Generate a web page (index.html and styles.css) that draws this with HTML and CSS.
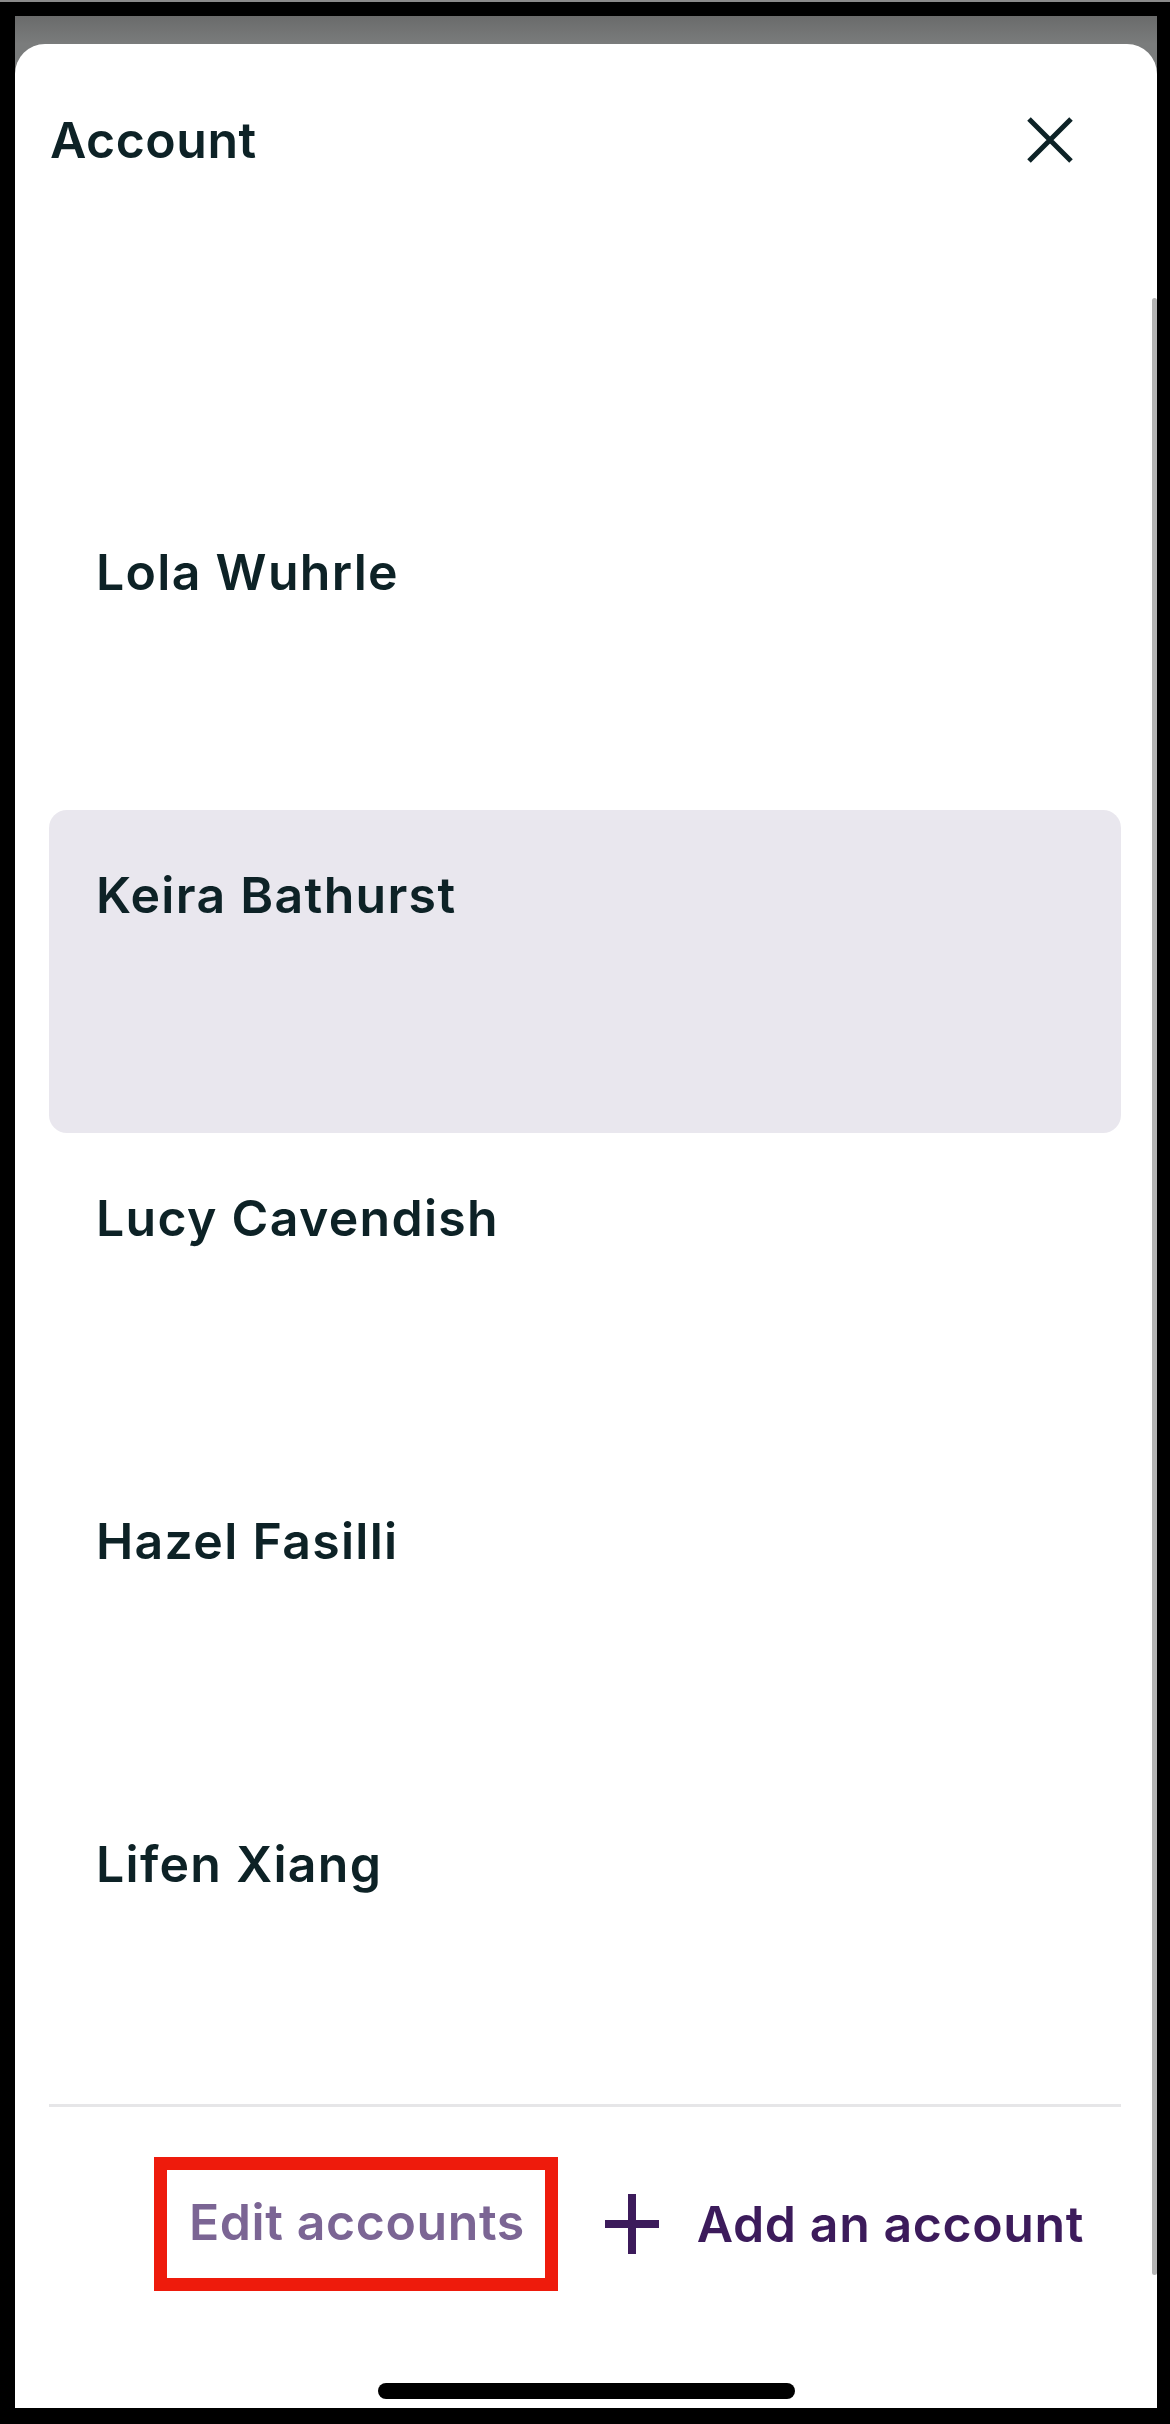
FILE: index.html
```html
<!DOCTYPE html>
<html lang="en">

<head>
    <meta charset="UTF-8">
    <meta name="viewport" content="width=device-width, initial-scale=1.0">
    <title>Account</title>
    <link rel="stylesheet" href="styles.css">
</head>

<body>
    <div class="device">
        <div class="screen">
            <div class="sheet">
                <div class="sheet-header">
                    <h1 class="title">Account</h1>
                    <button class="close" aria-label="Close">
                        <svg width="48" height="46" viewBox="0 0 48 46">
                            <path d="M3 2 L45 44 M45 2 L3 44" stroke="#0d2226" stroke-width="5" fill="none" />
                        </svg>
                    </button>
                </div>

                <ul class="accounts">
                    <li class="account">Lola Wuhrle</li>
                    <li class="account active">Keira Bathurst</li>
                    <li class="account">Lucy Cavendish</li>
                    <li class="account">Hazel Fasilli</li>
                    <li class="account">Lifen Xiang</li>
                </ul>

                <div class="divider"></div>

                <div class="actions">
                    <button class="edit">Edit accounts</button>
                    <button class="add">
                        <svg width="54" height="60" viewBox="0 0 54 60">
                            <path d="M27 0 V60 M0 30 H54" stroke="#3c1b5b" stroke-width="8" fill="none" />
                        </svg>
                        <span>Add an account</span>
                    </button>
                </div>

                <div class="home-bar"></div>
                <div class="scrollbar"></div>
            </div>
        </div>
    </div>
</body>

</html>
```

FILE: styles.css
```css
* {
    margin: 0;
    padding: 0;
    box-sizing: border-box;
    font-family: Inter, "Noto Sans", sans-serif;
}

body {
    background-color: #000;
    width: 1170px;
    height: 2424px;
    overflow: hidden;
}

.device {
    height: 2424px;
    border-top: 2px solid #8a8a8a;
    background-color: #000;
    padding: 14px 13px 16px 15px;
}

.screen {
    height: 2392px;
    background: linear-gradient(#6a6b6b, #7a7c7c 28px);
    padding-top: 28px;
}

.sheet {
    position: relative;
    height: 2364px;
    background-color: #fff;
    border-radius: 30px 30px 0 0;
    display: flex;
    flex-direction: column;
}

.sheet-header {
    display: flex;
    justify-content: space-between;
    align-items: flex-start;
    padding: 66px 83px 0 35px;
    height: 443px;
}

.title {
    font-size: 50px;
    line-height: 60px;
    font-weight: 600;
    color: #0d2226;
    letter-spacing: 0.5px;
}

.close {
    border: none;
    background: none;
    margin-top: 7px;
    display: flex;
}

.accounts {
    list-style: none;
    margin: 0 36px 0 34px;
}

.account {
    height: 323px;
    padding: 55px 0 0 47px;
    font-size: 50px;
    line-height: 60px;
    font-weight: 600;
    color: #0d2226;
    letter-spacing: 1.3px;
    border-radius: 18px;
}

.account.active {
    background-color: #e9e7ee;
}

.divider {
    height: 3px;
    margin: 2px 36px 0 34px;
    background-color: #e6e6e8;
}

.actions {
    display: flex;
    justify-content: flex-end;
    align-items: center;
    gap: 47px;
    padding: 50px 73px 0 0;
}

.actions button {
    border: none;
    background: none;
    font-size: 50px;
    line-height: 60px;
    font-weight: 600;
    letter-spacing: 0.6px;
}

.edit {
    color: #7b6594;
    border: 13px solid #ee1b0c !important;
    padding: 22px 20px 26px 22px;
}

.add {
    display: flex;
    align-items: center;
    gap: 38px;
    color: #3c1b5b;
}

.home-bar {
    margin: auto auto 9px;
    width: 417px;
    height: 16px;
    border-radius: 8px;
    background-color: #000;
}

.scrollbar {
    position: absolute;
    right: 0;
    top: 254px;
    width: 5px;
    height: 1977px;
    border-radius: 3px;
    background-color: #b4b4b4;
}
```
